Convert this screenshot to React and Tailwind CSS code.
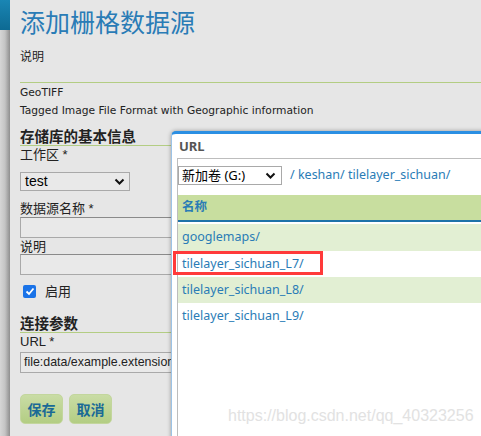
import React from "react";

const Label = ({ children, className = "" }) => (
  <div className={"text-[13px] leading-[16px] text-[#222] " + className}>{children}</div>
);

export default function App() {
  return (
    <div
      className="relative w-[481px] h-[436px] overflow-hidden bg-[#e6e6e6] flex"
      style={{ fontFamily: '"Noto Sans", "Noto Sans CJK SC", sans-serif' }}
    >
      {/* left strip */}
      <div className="w-[10px] h-full flex flex-col">
        <div className="h-[30px] bg-gradient-to-b from-[#1a86b4] to-[#0d6a93]" />
        <div className="flex-1 bg-gradient-to-r from-[#d6d6d6] via-[#c4c4c4] to-[#8f8f8f]" />
      </div>

      {/* main panel */}
      <div className="flex-1 h-full bg-[#e6e6e6] rounded-tl-[7px] pl-[10px] flex flex-col">
        <div className="mt-[6px] text-[25px] leading-[32px] text-[#2a7cb6]">添加栅格数据源</div>
        <div className="mt-[11px] text-[12px] leading-[16px] text-[#222]">说明</div>
        <div className="mt-[17px] h-px bg-[#b3cd83]" />
        <div className="mt-[1px] leading-[18px] text-[#222]" style={{ fontFamily: '"DejaVu Sans", sans-serif', fontSize: "10.7px" }}>GeoTIFF</div>
        <div className="leading-[18px] text-[#222]" style={{ fontFamily: '"DejaVu Sans", sans-serif', fontSize: "10.7px" }}>
          Tagged Image File Format with Geographic information
        </div>
        <div className="mt-[7px] text-[14.5px] leading-[18px] font-bold text-[#222]">存储库的基本信息</div>
        <div className="h-px bg-[#b3cd83]" />
        <Label>
          <span>工作区 </span><span style={{ fontFamily: '"Liberation Sans", sans-serif' }}>*</span>
        </Label>
        <div
          className="mt-[9px] w-[110px] h-[19px] border border-[#a9a9a9] bg-[#e9e9e9] flex items-center justify-between px-[4px] text-[14px] text-black"
          style={{ fontFamily: '"Liberation Sans", sans-serif' }}
        >
          <span>test</span>
          <svg width="11" height="8" viewBox="0 0 11 8"><path d="M1.5 1.5 L5.5 5.5 L9.5 1.5" stroke="#111" strokeWidth="2" fill="none" /></svg>
        </div>
        <Label className="mt-[9px]">
          <span>数据源名称 </span><span style={{ fontFamily: '"Liberation Sans", sans-serif' }}>*</span>
        </Label>
        <div className="h-[21px] w-[200px] border border-[#a9a9a9] border-t-[#8a8a8a] bg-[#e9e9e9]" />
        <Label>说明</Label>
        <div className="h-[21px] w-[200px] border border-[#a9a9a9] border-t-[#8a8a8a] bg-[#e9e9e9]" />
        <div className="mt-[8px] flex items-center">
          <div className="ml-[3px] w-[13px] h-[13px] rounded-[2px] bg-[#1a73e8] flex items-center justify-center">
            <svg width="10" height="9" viewBox="0 0 10 9"><path d="M1.5 4.5 L4 7 L8.5 1.5" stroke="#fff" strokeWidth="1.8" fill="none" /></svg>
          </div>
          <span className="ml-[9px] text-[13px] text-[#222] leading-[16px]">启用</span>
        </div>
        <div className="mt-[15px] text-[14.5px] leading-[18px] font-bold text-[#222]">连接参数</div>
        <div className="h-px bg-[#b3cd83]" />
        <Label>
          <span style={{ fontFamily: '"Liberation Sans", sans-serif' }}>URL *</span>
        </Label>
        <div
          className="mt-[2px] h-[21px] w-[200px] border border-[#a9a9a9] bg-[#e9e9e9] pl-[3px] text-[12.4px] leading-[19px] text-[#222] whitespace-nowrap overflow-hidden"
          style={{ fontFamily: '"Liberation Sans", sans-serif' }}
        >
          file:data/example.extension
        </div>
        <div className="mt-[21px] flex gap-[6px]">
          <button className="w-[43px] h-[30px] rounded-[5px] border border-[#c3d69d] bg-gradient-to-b from-[#c9dca5] to-[#b3cd83] text-[14px] font-bold text-[#1a6a96]">保存</button>
          <button className="w-[43px] h-[30px] rounded-[5px] border border-[#c3d69d] bg-gradient-to-b from-[#c9dca5] to-[#b3cd83] text-[14px] font-bold text-[#1a6a96]">取消</button>
        </div>
      </div>

      {/* dialog */}
      <div className="absolute left-[171px] top-[131px] w-[330px] h-[320px] bg-white rounded-t-[5px] border-t-[3px] border-t-[#2b8fe3] border-l border-l-[#9cc3e6] shadow-[0_0_4px_rgba(0,0,0,0.35)]">
        <div className="pl-[7px] pt-[4px] h-[24px] text-[13px] leading-[16px] font-bold text-[#555]">URL</div>
        <div className="ml-[5px] border-t border-l border-[#bdbdbd] h-[300px] pt-[7px]">
          <div className="flex items-center">
            <div className="w-[104px] h-[19px] border border-[#a9a9a9] bg-white flex items-center justify-between pl-[3px] pr-[5px] text-[13px] text-black">
              <span>新加卷 (G:)</span>
              <svg width="11" height="8" viewBox="0 0 11 8"><path d="M1.5 1.5 L5.5 5.5 L9.5 1.5" stroke="#111" strokeWidth="2" fill="none" /></svg>
            </div>
            <span className="ml-[8px] text-[12.5px] text-[#2a7cb6]">/ keshan/ tilelayer_sichuan/</span>
          </div>
          <div className="mt-[10px] h-[27px] bg-[#c8de9f] border-b-2 border-[#1d72a8] flex items-center pl-[4px] text-[12.5px] font-bold text-[#2a7cb6]">名称</div>
          <div className="mt-[2px] flex flex-col text-[12.5px] text-[#2a7cb6]">
            <div className="h-[27px] bg-[#e2efd3] flex items-center pl-[4px]">googlemaps/</div>
            <div className="h-[26px] bg-white flex items-center pl-[4px]">tilelayer_sichuan_L7/</div>
            <div className="h-[26px] bg-[#e2efd3] flex items-center pl-[4px]">tilelayer_sichuan_L8/</div>
            <div className="h-[27px] bg-white flex items-center pl-[4px]">tilelayer_sichuan_L9/</div>
          </div>
        </div>
      </div>

      {/* red annotation box */}
      <div className="absolute left-[173px] top-[251px] w-[150px] h-[24px] border-[3px] border-[#ff3a3a]" />

      {/* watermark */}
      <div
        className="absolute left-[228px] top-[406px] text-[16px] leading-[20px] text-[#e2e2e2]"
        style={{ fontFamily: '"Liberation Sans", sans-serif' }}
      >
        https://blog.csdn.net/qq_40323256
      </div>
    </div>
  );
}
